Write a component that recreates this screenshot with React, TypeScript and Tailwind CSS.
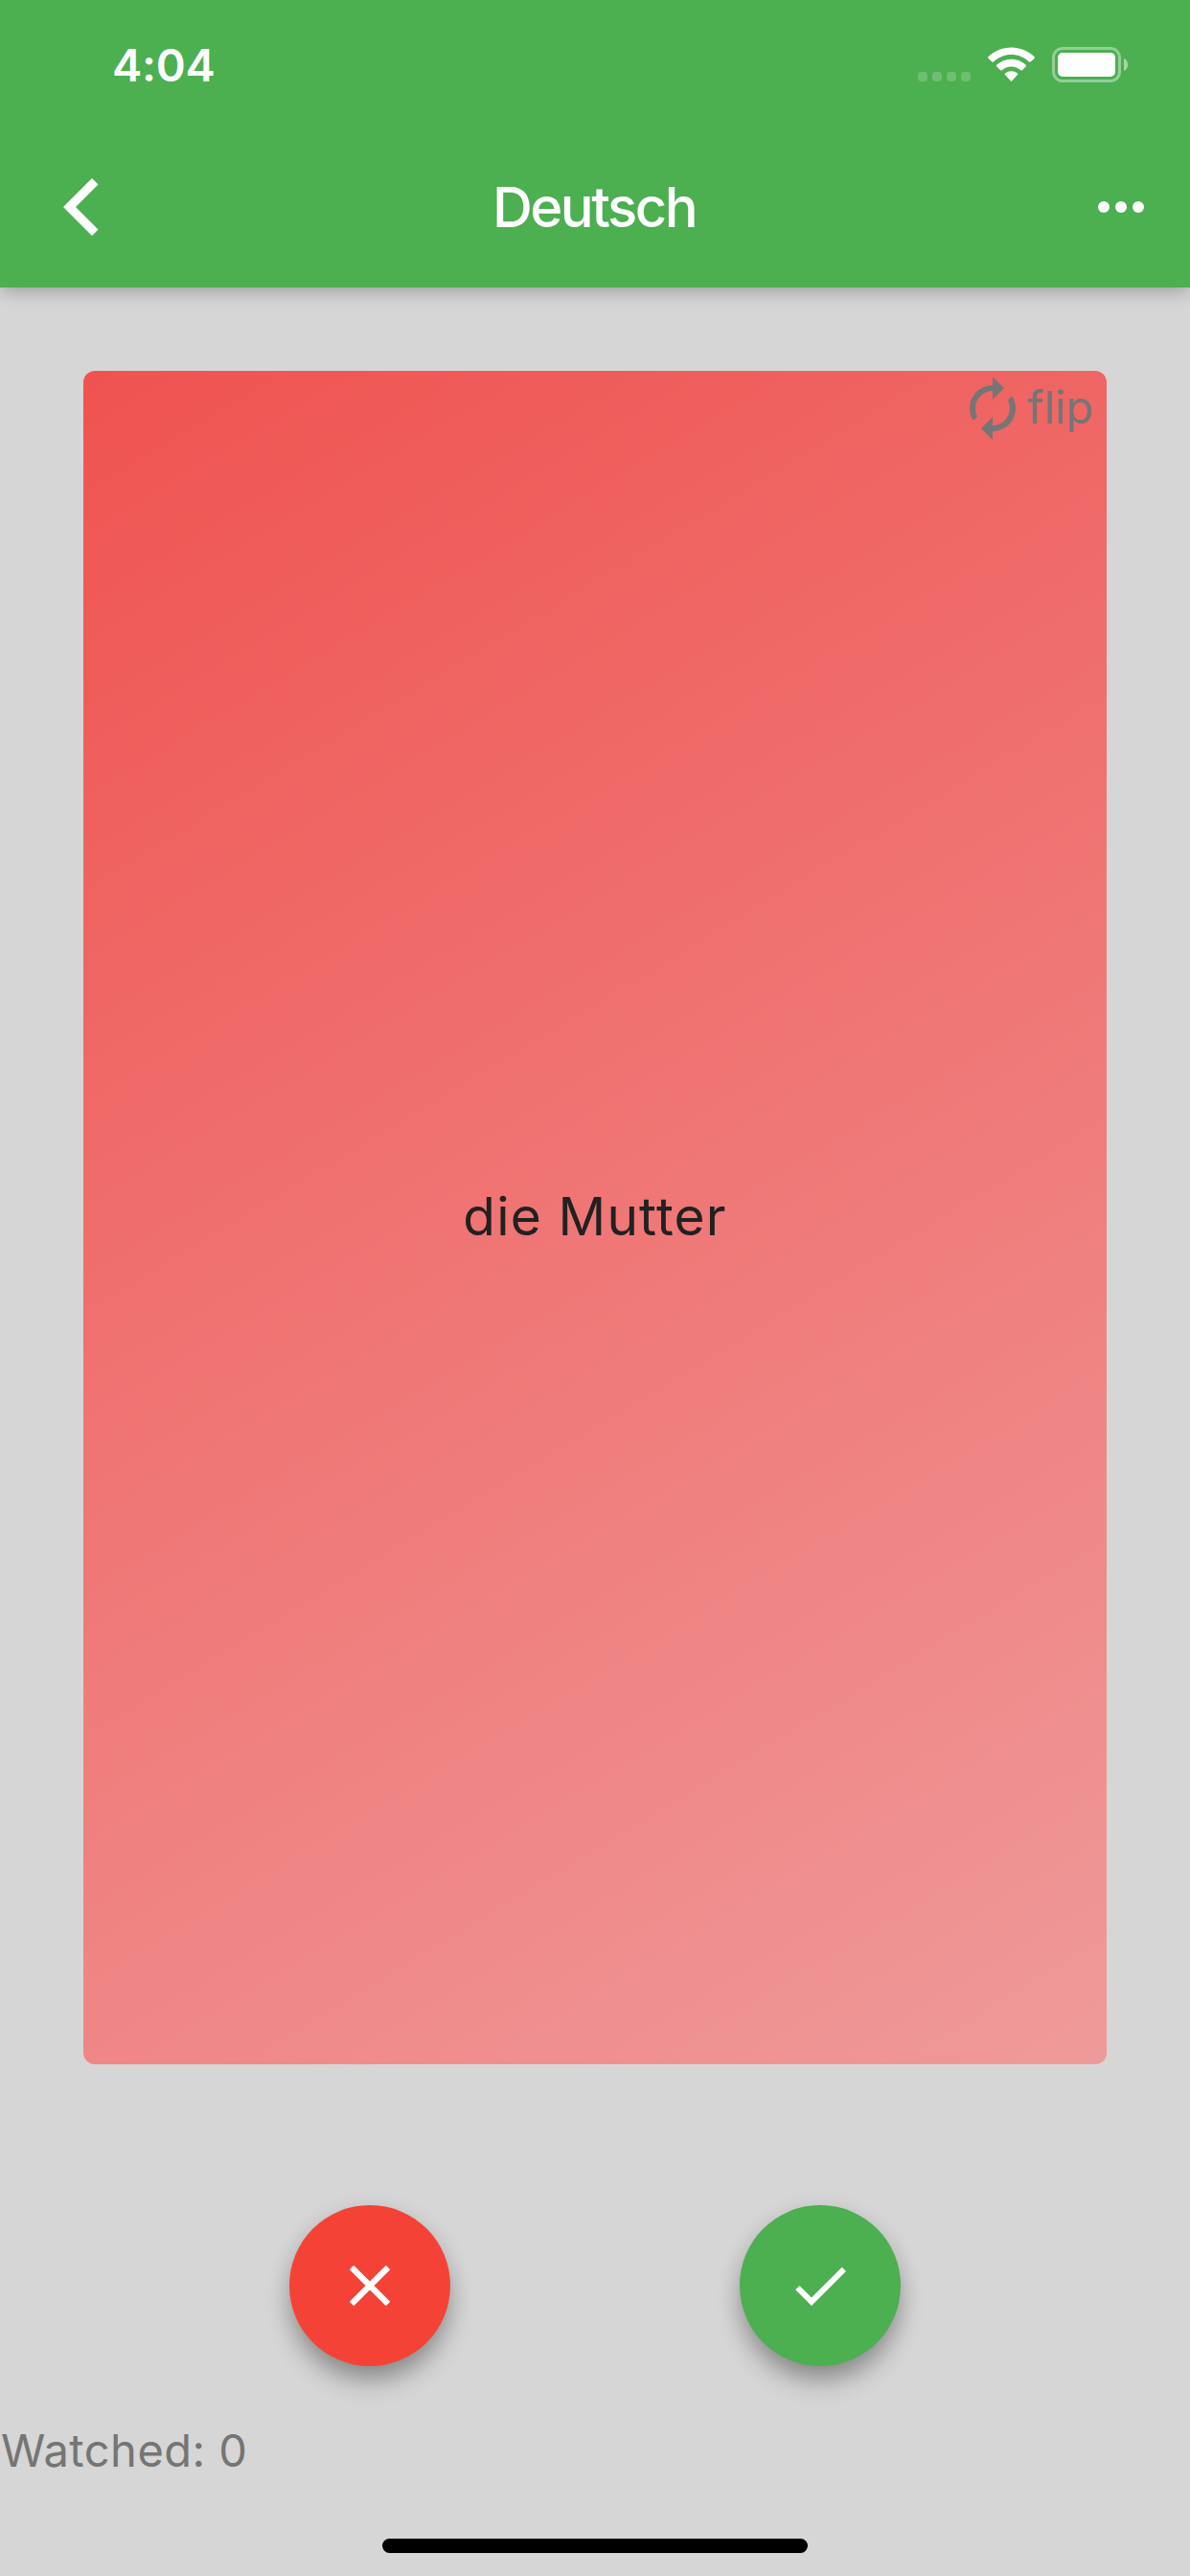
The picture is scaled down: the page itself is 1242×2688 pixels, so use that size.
function StatusBar() {
  return (
    <div className="flex h-[132px] items-start justify-between pl-[117px] pr-[65px]">
      <span className="mt-[38px] text-[47px] leading-[60px] font-semibold tracking-[-0.3px]">4:04</span>
      <div className="mt-[49px] flex h-[37px] items-start">
        <div className="mt-[26px] mr-[18px] flex gap-[5px]">
          {[0, 1, 2, 3].map((dot) => (
            <span key={dot} className="size-[10px] rounded-[4px] bg-white/20" />
          ))}
        </div>
        <svg className="h-[37px] w-[49px]" viewBox="0 0 49 37" fill="white">
          <path d="M24.5 0.4C33.6 0.4 42 4 48.4 10.1C49 10.7 49 11.3 48.5 11.9L44.6 15.4C44.1 15.9 43.5 15.8 43 15.4C38 10.8 31.5 8.1 24.5 8.1C17.5 8.1 11 10.8 6 15.4C5.5 15.8 4.9 15.9 4.4 15.4L0.5 11.9C0 11.3 0 10.7 0.6 10.1C7 4 15.4 0.4 24.5 0.4Z" />
          <path d="M24.5 12.7C30.2 12.7 35.5 14.9 39.6 18.6C40.2 19.2 40.2 19.8 39.7 20.4L35.9 24.2C35.4 24.7 34.9 24.7 34.3 24.2C31.6 21.9 28.2 20.5 24.5 20.5C20.8 20.5 17.4 21.9 14.7 24.2C14.1 24.7 13.6 24.7 13.1 24.2L9.3 20.4C8.8 19.8 8.8 19.2 9.4 18.6C13.5 14.9 18.8 12.7 24.5 12.7Z" />
          <path d="M24.5 25.2C26.9 25.2 29.1 26 30.9 27.4C31.5 27.9 31.5 28.5 31 29L25.3 35.2C24.8 35.8 24.2 35.8 23.7 35.2L18 29C17.5 28.5 17.5 27.9 18.1 27.4C19.9 26 22.1 25.2 24.5 25.2Z" />
        </svg>
        <svg className="ml-[18px] h-[37px] w-[79px]" viewBox="0 0 79 37">
          <rect x="1.5" y="1.5" width="69" height="34" rx="9.5" fill="none" stroke="white" strokeOpacity="0.4" strokeWidth="3" />
          <rect x="6" y="6" width="60" height="25" rx="5" fill="white" />
          <path d="M75 12C77.600 13 79 15.500 79 18.500C79 21.500 77.600 24 75 25Z" fill="white" fillOpacity="0.5" />
        </svg>
      </div>
    </div>
  );
}

function AppBar() {
  return (
    <header className="relative z-10 h-[300px] shrink-0 bg-[#4caf50] text-white shadow-[0_6px_14px_-2px_rgba(0,0,0,0.15),0_6px_20px_rgba(0,0,0,0.1)]">
      <StatusBar />
      <div className="grid h-[168px] grid-cols-3 items-center">
        <button className="ml-[48px] size-[72px]" aria-label="Back">
          <svg className="size-[72px]" viewBox="0 0 72 72" fill="white">
            <path d="M48 6L54.500 12.500L31 36L54.500 59.500L48 66L18 36Z" />
          </svg>
        </button>
        <h1 className="-ml-[2px] text-center text-[58px] leading-[72px] font-medium tracking-[-2.5px]">Deutsch</h1>
        <button className="mr-[36px] size-[72px] justify-self-end" aria-label="More">
          <svg className="size-[72px]" viewBox="0 0 24 24" fill="white">
            <circle cx="6" cy="12" r="2" />
            <circle cx="12" cy="12" r="2" />
            <circle cx="18" cy="12" r="2" />
          </svg>
        </button>
      </div>
    </header>
  );
}

function FlashCard() {
  return (
    <section className="relative mx-[87px] mt-[87px] flex h-[1767px] shrink-0 items-center justify-center rounded-[12px] bg-[linear-gradient(148.85deg,#ef5350,#ef9a9a)]">
      <p className="-mt-[3px] text-[55px] leading-[66px] tracking-[1.17px] text-[#212121]">die Mutter</p>
      <button className="absolute top-[3px] right-[14px] flex items-center text-[#757575]">
        <svg className="size-[72px]" viewBox="0 0 24 24" fill="currentColor">
          <path d="M12 6v3l4-4-4-4v3c-4.420 0-8 3.580-8 8 0 1.570.460 3.030 1.240 4.260L6.700 14.800c-.450-.830-.700-1.790-.700-2.800 0-3.310 2.690-6 6-6zm6.760 1.740L17.300 9.200c.440.840.700 1.790.700 2.800 0 3.310-2.690 6-6 6v-3l-4 4 4 4v-3c4.420 0 8-3.580 8-8 0-1.570-.460-3.030-1.240-4.260z" />
        </svg>
        <span className="-mt-[2px] text-[47px] leading-[56px]">flip</span>
      </button>
    </section>
  );
}

const fabClass =
  'flex size-[168px] items-center justify-center rounded-full text-white shadow-[0_18px_28px_-4px_rgba(0,0,0,0.32),0_5px_24px_0_rgba(0,0,0,0.1)]';

function AnswerButtons() {
  return (
    <div className="mt-[147px] flex h-[168px] shrink-0 justify-center gap-[302px]">
      <button className={`${fabClass} bg-[#f44336]`} aria-label="Wrong">
        <svg className="size-[72px]" viewBox="0 0 72 72" fill="currentColor" stroke="currentColor" strokeWidth="2" strokeLinejoin="round">
          <path d="M19.200 16.200L36 33L52.800 16.200L55.800 19.200L39 36L55.800 52.800L52.800 55.800L36 39L19.200 55.800L16.200 52.800L33 36L16.200 19.200Z" />
        </svg>
      </button>
      <button className={`${fabClass} bg-[#4caf50]`} aria-label="Right">
        <svg className="size-[72px]" viewBox="0 0 24 24" fill="currentColor">
          <path d="M9 16.170L4.830 12l-1.420 1.410L9 19 21 7l-1.410-1.410z" />
        </svg>
      </button>
    </div>
  );
}

export default function App() {
  return (
    <div className="flex h-[2688px] w-[1242px] flex-col overflow-hidden bg-[#d6d6d6] font-['Inter',sans-serif]">
      <AppBar />
      <FlashCard />
      <AnswerButtons />
      <p className="mt-[59px] ml-px text-[47px] leading-[57px] tracking-[0.5px] text-[#757575]">Watched: 0</p>
      <div className="mt-auto mb-[24px] h-[15px] w-[444px] self-center rounded-full bg-black" />
    </div>
  );
}
